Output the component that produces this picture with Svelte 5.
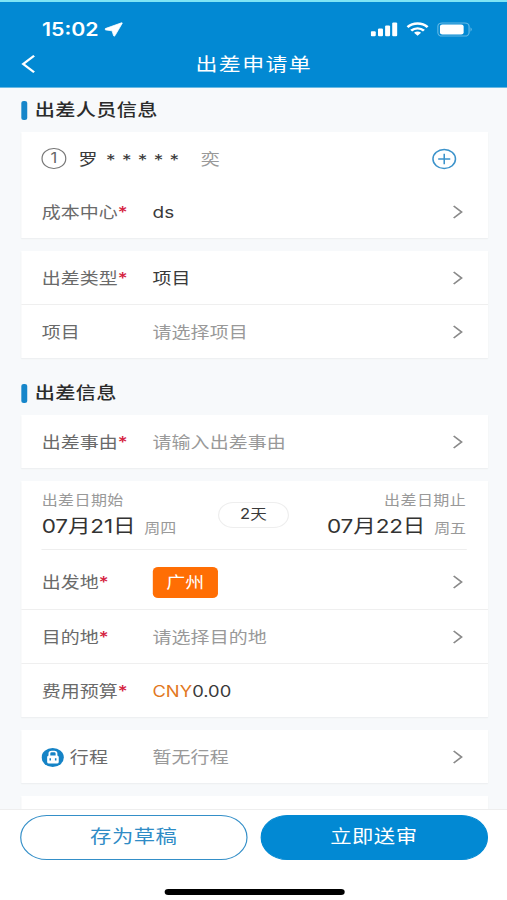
<script>
  const traveller = { index: 1, first: '罗', masked: '*****', last: '奕' };
  const dates = {
    start: { label: '出差日期始', day: '07月21日', week: '周四' },
    end: { label: '出差日期止', day: '07月22日', week: '周五' },
    total: '2天',
  };
</script>

{#snippet chevron()}
  <svg class="chevron" width="9" height="14" viewBox="0 0 9 14">
    <path d="M1 1 L7.6 7 L1 13" fill="none" stroke="#8a8a8a" stroke-width="1.6" />
  </svg>
{/snippet}

{#snippet row(label, required, value, placeholder = false)}
  <div class="row">
    <span class="label">{label}{#if required}<i>*</i>{/if}</span>
    <span class="value" class:placeholder>{value}</span>
    {@render chevron()}
  </div>
{/snippet}

<div class="screen">
  <header>
    <div class="status">
      <span class="clock">15:02</span>
      <svg class="arrow" width="16" height="15" viewBox="0 0 16 15">
        <path d="M14.6 .8 L.9 6.6 Q.3 7.5 1.2 7.9 L6.6 8.8 L7.9 13.8 Q8.4 14.6 9 13.8 L15.2 1.3 Q15.3 .6 14.6 .8 Z" fill="#fff" stroke="#fff" stroke-width=".7" />
      </svg>
      <svg class="signal" width="23" height="15" viewBox="0 0 23 15">
        <g fill="#fff">
          <rect x="0" y="9.3" width="4.2" height="4.9" rx="1" />
          <rect x="6.1" y="6.6" width="4.2" height="7.6" rx="1" />
          <rect x="12.1" y="3.6" width="4.2" height="10.6" rx="1" />
          <rect x="18.1" y=".6" width="4.2" height="13.6" rx="1" />
        </g>
      </svg>
      <svg class="wifi" width="19" height="14" viewBox="0 0 19 14">
        <g fill="none" stroke="#fff" stroke-width="2.3">
          <path d="M1 5.1 C5.8 .3 13.2 .3 18 5.1" />
          <path d="M4.1 8.6 C7.2 5.6 11.8 5.6 14.9 8.6" />
        </g>
        <path d="M6.5 10.8 Q9.5 8.2 12.5 10.8 L9.5 13.8 Z" fill="#fff" />
      </svg>
      <svg class="battery" width="30" height="15" viewBox="0 0 30 15">
        <rect x=".6" y=".9" width="26.4" height="13.2" rx="3.6" fill="none" stroke="#65b8e4" />
        <rect x="2.4" y="2.4" width="20" height="10.2" rx="2" fill="#fff" />
        <path d="M28.2 5.3 Q30.3 7.5 28.2 9.7Z" fill="#65b8e4" />
      </svg>
    </div>
    <div class="nav">
      <svg width="13" height="20" viewBox="0 0 13 20">
        <path d="M11.8 1.8 L2.6 10 L11.8 18.2" fill="none" stroke="#fff" stroke-width="2.1" />
      </svg>
      <h1>出差申请单</h1>
    </div>
  </header>

  <main>
    <h2>出差人员信息</h2>
    <section class="card">
      <div class="row person">
        <span class="index">{traveller.index}</span>
        <span class="first">{traveller.first}</span>
        <span class="masked">{traveller.masked}</span>
        <span class="last">{traveller.last}</span>
        <svg class="add" width="22" height="22" viewBox="0 0 22 22">
          <g fill="none" stroke="#3c93cb" stroke-width="1.3">
            <circle cx="11" cy="11" r="9.5" />
            <path d="M5.9 11 H16.1 M11 5.8 V16.2" />
          </g>
        </svg>
      </div>
      {@render row('成本中心', true, 'ds')}
    </section>

    <section class="card lined">
      {@render row('出差类型', true, '项目')}
      {@render row('项目', false, '请选择项目', true)}
    </section>

    <h2 class="second">出差信息</h2>
    <section class="card">
      {@render row('出差事由', true, '请输入出差事由', true)}
    </section>

    <section class="card lined trip">
      <div class="dates">
        <div class="date">
          <small>{dates.start.label}</small>
          <p><b>{dates.start.day}</b><span>{dates.start.week}</span></p>
        </div>
        <span class="total">{dates.total}</span>
        <div class="date end">
          <small>{dates.end.label}</small>
          <p><b>{dates.end.day}</b><span>{dates.end.week}</span></p>
        </div>
      </div>
      <div class="row depart">
        <span class="label">出发地<i>*</i></span>
        <span class="value"><span class="city">广州</span></span>
        {@render chevron()}
      </div>
      {@render row('目的地', true, '请选择目的地', true)}
      <div class="row">
        <span class="label">费用预算<i>*</i></span>
        <span class="value money"><em>CNY</em>0.00</span>
      </div>
    </section>

    <section class="card">
      <div class="row">
        <span class="label journey">
          <svg width="19" height="19" viewBox="0 0 19 19">
            <circle cx="9.5" cy="9.5" r="9.4" fill="#1583c6" />
            <path d="M6.7 8 V5.6 Q6.7 3.5 8.6 3.5 H10.8 Q12.7 3.5 12.7 5.6 V8" fill="none" stroke="#fff" stroke-width="1.5" />
            <rect x="4.8" y="7.4" width="9.8" height="8.2" rx="1.6" fill="#fff" />
            <path d="M7.4 10.2 V12.4 M12 10.2 V12.4" stroke="#1583c6" stroke-width="1.3" />
          </svg>
          行程
        </span>
        <span class="value placeholder">暂无行程</span>
        {@render chevron()}
      </div>
    </section>
    <section class="card next"></section>
  </main>

  <footer>
    <div class="actions">
      <button class="draft">存为草稿</button>
      <button class="submit">立即送审</button>
    </div>
    <div class="home"></div>
  </footer>
</div>

<style>
  :global(body) { margin: 0; overflow: hidden; background: #fff; }
  /* 428-unit wide phone layout, stretched horizontally to fill the 507px viewport */
  .screen {
    width: 428px; height: 900px; overflow: hidden;
    display: flex; flex-direction: column;
    transform: scaleX(1.184579); transform-origin: 0 0;
    background: #f7f9fb; color: #3a3a3a;
    font: 16px/20px Inter, "Noto Sans CJK SC", sans-serif;
    white-space: nowrap;
  }
  header {
    height: 88px; flex: none; box-sizing: border-box;
    background: #0289d3; border-top: 2px solid #7ee5f5; color: #fff;
    border-bottom: 1px solid #69b9e3;
  }
  .status { height: 36px; padding: 18px 0 0 35.5px; box-sizing: border-box; display: flex; align-items: center; }
  .clock { font-size: 18px; font-weight: 600; width: 52.5px; letter-spacing: 0; padding-top: 1px; }
  .arrow { margin-right: 208.5px; }
  .signal { margin-right: 7px; }
  .wifi { margin-right: 7px; }
  .nav { height: 49px; padding: 2px 0 0 18px; box-sizing: border-box; display: flex; align-items: center; }
  .nav svg { width: 17px; margin-left: -3px; }
  h1 { margin: 0 0 0 133px; font-size: 18.5px; font-weight: 400; letter-spacing: 1.2px; line-height: 24px; }
  main { flex: 1; min-height: 0; overflow: hidden; padding: 0 16.5px 0 18px; }
  h2 {
    margin: 0; height: 44px; display: flex; align-items: center;
    font-size: 17px; font-weight: 500; letter-spacing: .3px; color: #2b2b2b;
  }
  h2::before { content: ""; width: 4.5px; height: 19px; border-radius: 2px; background: #1686ca; margin-right: 6.8px; }
  h2.second { height: 57px; padding-top: 13px; box-sizing: border-box; }
  .card { background: #fff; box-shadow: 0 1px 1px #eceef0; }
  .card + .card { margin-top: 13px; }
  .row { height: 53px; padding: 0 20.8px 0 17.2px; box-sizing: border-box; display: flex; align-items: center; }
  .lined .row + .row { border-top: 1px solid #efefef; height: 54px; }
  .label { width: 93.5px; flex: none; color: #6a6a6a; position: relative; top: .5px; letter-spacing: .05px; }
  i { font-style: normal; font-weight: 500; color: #d5233f; font-size: 16px; line-height: 16px; }
  .value { flex: 1; letter-spacing: .1px; }
  .placeholder { color: #999; }
  .person { padding-right: 26px; }
  .index {
    width: 20.5px; height: 20.5px; border: 1.3px solid #777; border-radius: 50%; box-sizing: border-box;
    text-align: center; font-size: 14px; line-height: 18px; color: #666; margin-right: 10.5px;
  }
  .first { width: 23.3px; }
  .masked { font-size: 16px; letter-spacing: 5.4px; width: 80px; padding-top: 2px; }
  .last { color: #999; flex: 1; }
  .dates { height: 69px; margin: 0 18px 0 17.2px; border-bottom: 1px solid #eee; box-sizing: border-box; display: flex; justify-content: space-between; }
  .date { padding-top: 9px; }
  .date small { display: block; font-size: 13.5px; line-height: 20px; letter-spacing: .35px; color: #999; }
  .date p { margin: 2.5px 0 0; line-height: 26px; display: flex; align-items: center; }
  .date b { font-size: 19px; font-weight: 400; letter-spacing: -.1px; color: #333; }
  .date p span { font-size: 13.5px; color: #999; margin: 2px 0 0 7.5px; }
  .end { text-align: right; }
  .total {
    width: 59.5px; height: 26px; border: 1px solid #eee; border-radius: 13px; box-sizing: border-box;
    margin: 21px 0 0 3px; text-align: center; font-size: 14px; line-height: 22px;
  }
  .lined .row.depart { border-top: 0; height: 59px; padding-top: 5px; }
  .depart .label { top: 0; }
  .city { display: inline-block; width: 55.5px; height: 31px; line-height: 30px; border-radius: 4.5px; background: #ff6e04; color: #fff; text-align: center; }
  em { font-style: normal; color: #e27722; }
  .money { font-size: 15.5px; padding-top: 2px; letter-spacing: 0; }
  .journey { display: flex; align-items: center; gap: 5.3px; margin-left: -.5px; margin-right: .5px; }
  .next { height: 30px; }
  footer { height: 91px; flex: none; box-sizing: border-box; background: #fff; border-top: 1px solid #eee; padding: 5px 16.5px 0 17px; }
  .actions { display: flex; gap: 11px; }
  button {
    flex: 1; height: 45px; padding: 0 0 2px; border: 1.3px solid #348fc8; border-radius: 23px; background: #fff;
    color: #2f8cc6; font: inherit; font-size: 18px; letter-spacing: .4px;
  }
  .submit { background: #0289d3; border-color: #0289d3; color: #fff; }
  .home { width: 152px; height: 5.5px; margin: 29px 0 0 121.5px; border-radius: 3px; background: #000; }
</style>
